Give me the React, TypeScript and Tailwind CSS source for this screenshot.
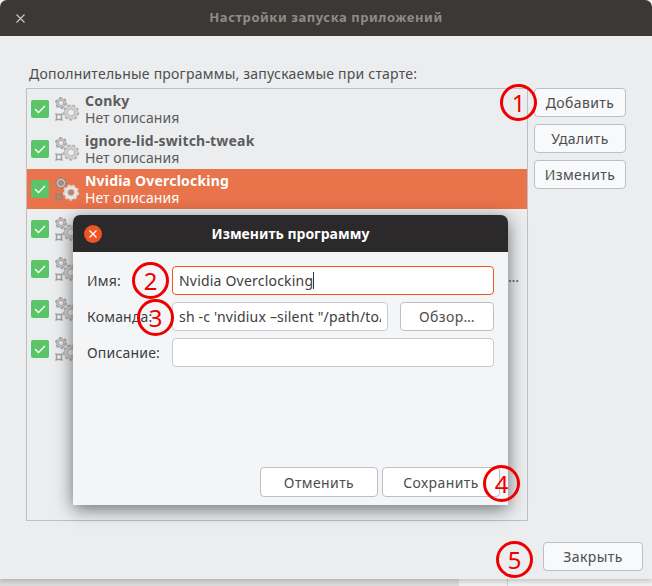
const font = { fontFamily: '"Noto Sans", "Open Sans", sans-serif' }

function Gear({ cx, cy, r, teeth, fill, edge, hole }: { cx: number; cy: number; r: number; teeth: number; fill: string; edge: string; hole: string }) {
  const tr = r - 0.9
  const dash = (2 * Math.PI * tr) / teeth / 2
  return (
    <g>
      <circle cx={cx} cy={cy} r={tr} fill="none" stroke={edge} strokeWidth="1.8" strokeDasharray={`${dash} ${dash}`} />
      <circle cx={cx} cy={cy} r={r - 1.4} fill={fill} stroke={edge} strokeWidth="0.6" />
      <circle cx={cx} cy={cy} r={r * 0.42} fill={hole} stroke={edge} strokeWidth="0.8" />
    </g>
  )
}

function GearsIcon({ selected }: { selected?: boolean }) {
  const fill = selected ? '#e6e5e3' : '#cfcfcf'
  const edge = selected ? '#d8d6d3' : '#adadad'
  const darkFill = selected ? '#c9c7c5' : '#c4c4c4'
  const darkEdge = selected ? '#8a8684' : '#a0a0a0'
  const hole = selected ? '#b5896f' : '#ecedef'
  return (
    <svg width="26" height="26" viewBox="0 0 26 26" className="shrink-0">
      <Gear cx={7} cy={7} r={6} teeth={6} fill={darkFill} edge={darkEdge} hole={hole} />
      <Gear cx={17} cy={16.5} r={8.2} teeth={9} fill={fill} edge={edge} hole={hole} />
      <rect x={2.5} y={18.5} width={5} height={5} fill="none" stroke={darkEdge} strokeWidth="1.5" />
      <path d="M1.5 17.5l1.5 1.5M8.5 17.5l-1.5 1.5M1.5 24.5l1.5-1.5M8.5 24.5l-1.5-1.5" stroke={darkEdge} strokeWidth="1.2" />
    </svg>
  )
}

function CheckBox() {
  return (
    <div className="flex h-[18px] w-[18px] shrink-0 items-center justify-center rounded-[2px] bg-[#5ac566]">
      <svg width="12" height="10" viewBox="0 0 12 10" fill="none">
        <path d="M1 5l3.5 3.5L11 2" stroke="#fff" strokeWidth="1.4" />
      </svg>
    </div>
  )
}

function Row({ name, selected, more }: { name?: string; selected?: boolean; more?: boolean }) {
  return (
    <div className={`flex h-10 items-center pl-1 pr-2 ${selected ? 'bg-[#e9734a]' : ''}`}>
      <CheckBox />
      <div className="ml-[5px]">
        <GearsIcon selected={selected} />
      </div>
      <div className={`ml-[5px] flex-1 text-[14px] leading-[17px] ${selected ? 'text-white' : 'text-[#5c5c5c]'}`}>
        {name && <div className="h-[17px] font-bold tracking-[0.2px]">{name}</div>}
        {name && <div className="h-[17px] tracking-[0.05px]">Нет описания</div>}
      </div>
      {more && <span className="mt-[14px] text-[14px] text-[#5c5c5c]">…</span>}
    </div>
  )
}

function Btn({ label, className }: { label: string; className: string }) {
  return (
    <div className={`flex items-center justify-center rounded-[4px] border border-[#bcc0c6] bg-[#f8f9fa] text-[14px] tracking-[0.4px] text-[#4e4e4e] ${className}`}>
      {label}
    </div>
  )
}

function Mark({ n, x, y }: { n: number; x: number; y: number }) {
  return (
    <div
      className="absolute z-30 flex h-[37px] w-[37px] items-center justify-center rounded-full border-[3px] border-[#ee0000] text-[24px] leading-none text-[#ee0000]"
      style={{ left: x - 18, top: y - 18 }}
    >
      {n}
    </div>
  )
}

function Dialog() {
  return (
    <div className="absolute left-[73px] top-[215px] z-20 flex h-[290px] w-[435px] flex-col rounded-t-[7px] bg-[#f4f5f7] shadow-[0_4px_18px_rgba(0,0,0,0.55)]">
      <div className="relative flex h-[37px] shrink-0 items-center justify-center rounded-t-[7px] bg-[#2b2929] text-[14px] font-bold text-white">
        <div className="absolute left-[11px] top-[10px] flex h-[18px] w-[18px] items-center justify-center rounded-full bg-[#ee5522]">
          <svg width="8" height="8" viewBox="0 0 8 8" stroke="#fff" strokeWidth="1.3">
            <path d="M0.5 0.5l7 7M7.5 0.5l-7 7" />
          </svg>
        </div>
        Изменить программу
      </div>
      <div className="flex flex-1 flex-col pl-[14px] pr-[14px] pt-[14px] text-[14px] tracking-[0.2px] text-[#3d3d3d]">
        <div className="flex h-[29px] items-center">
          <span className="w-[85px]">Имя:</span>
          <div className="flex h-full flex-1 items-center rounded-[4px] border border-[#ee5522] bg-white px-[6px] text-[14px]">
            Nvidia Overclocking<span className="h-[17px] w-px bg-[#333]" />
          </div>
        </div>
        <div className="mt-[7px] flex h-[29px] items-center">
          <span className="w-[85px]">Команда:</span>
          <div className="flex h-full w-[216px] items-center rounded-[4px] border border-[#c8cbd0] bg-white pl-[6px] pr-[6px] text-[14px]">
            <div className="overflow-hidden whitespace-nowrap">sh -c 'nvidiux –silent "/path/to/nvidiux"'</div>
          </div>
          <Btn label="Обзор…" className="ml-[12px] h-full w-[94px] bg-white text-[#3d3d3d]" />
        </div>
        <div className="mt-[7px] flex h-[29px] items-center">
          <span className="w-[85px]">Описание:</span>
          <div className="h-full flex-1 rounded-[4px] border border-[#c8cbd0] bg-white" />
        </div>
        <div className="mb-[8px] mt-auto flex justify-end gap-[4px]">
          <Btn label="Отменить" className="h-[30px] w-[118px] bg-white text-[#3d3d3d]" />
          <Btn label="Сохранить" className="-mr-[6px] h-[30px] w-[118px] bg-white text-[#3d3d3d]" />
        </div>
      </div>
    </div>
  )
}

export default function App() {
  return (
    <div className="relative flex h-[586px] w-[652px] flex-col overflow-hidden bg-[#f3f3f4]" style={font}>
      <div className="relative z-10 flex h-[579px] shrink-0 flex-col rounded-t-[7px] bg-[#ecedef] shadow-[0_2px_5px_rgba(0,0,0,0.2)]">
        <div className="relative flex h-9 shrink-0 items-center justify-center rounded-t-[7px] bg-[#3b3835] text-[13px] font-bold tracking-[0.55px] text-[#8f8c88]">
          <svg className="absolute left-[16px] top-[14px]" width="9" height="9" viewBox="0 0 9 9" stroke="#c9c7c4" strokeWidth="1.2">
            <path d="M0.5 0.5l8 8M8.5 0.5l-8 8" />
          </svg>
          Настройки запуска приложений
        </div>
        <div className="flex flex-1 flex-col pl-[26px] pr-[9px]">
          <div className="mt-[28px] h-[24px] pl-[3px] text-[14px] leading-[20px] tracking-[0.22px] text-[#4e4e4e]">
            Дополнительные программы, запускаемые при старте:
          </div>
          <div className="flex">
            <div className="h-[433px] w-[502px] border border-[#bcc0c6]">
              <Row name="Conky" />
              <Row name="ignore-lid-switch-tweak" />
              <Row name="Nvidia Overclocking" selected />
              <Row />
              <Row more />
              <Row />
              <Row />
            </div>
            <div className="ml-[6px] flex w-[92px] flex-col gap-[7px]">
              <Btn label="Добавить" className="h-[29px]" />
              <Btn label="Удалить" className="h-[29px]" />
              <Btn label="Изменить" className="h-[29px]" />
            </div>
          </div>
          <div className="mt-[21px] flex justify-end">
            <Btn label="Закрыть" className="h-[29px] w-[100px]" />
          </div>
        </div>
      </div>
      <div className="flex flex-1">
        <div className="w-[459px] bg-[#dadada]" />
        <div className="w-[49px] border-r border-[#cfcfcf] bg-[#efefef]" />
        <div className="flex-1 bg-[#f0f0f0]" />
      </div>
      <Dialog />
      <Mark n={1} x={518} y={102} />
      <Mark n={2} x={150} y={280} />
      <Mark n={3} x={155} y={317} />
      <Mark n={4} x={501} y={483} />
      <Mark n={5} x={514} y={559} />
    </div>
  )
}
